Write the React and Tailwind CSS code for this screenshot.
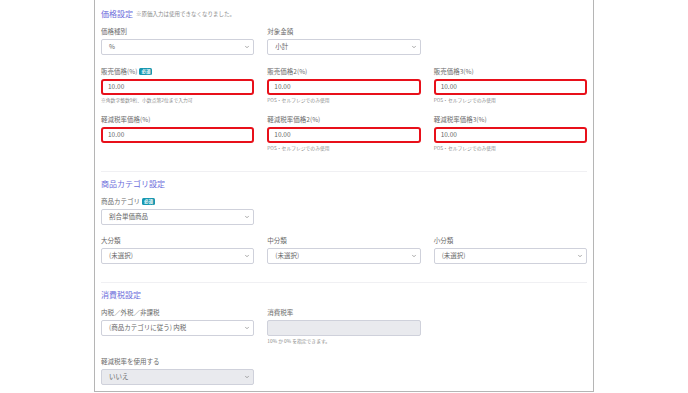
import React from 'react';
import { ChevronDown } from 'lucide-react';

const FONT = { fontFamily: '"Noto Sans CJK JP", "Noto Sans", sans-serif' };

const Badge = () => (
  <span className="ml-[2px] inline-flex h-[7px] items-center rounded-[1.5px] bg-[#1697b0] px-[2px] text-[4.5px] font-bold leading-none text-white">
    必須
  </span>
);

const Label = ({ children, required }) => (
  <div className="flex h-[8px] items-center text-[6.5px] leading-[8px] text-[#6b6b6b]">
    {children}
    {required && <Badge />}
  </div>
);

const Help = ({ children }) => (
  <div className="mt-[2px] h-[6px] text-[4.8px] leading-[6px] text-[#8a8a8a]">{children}</div>
);

const Select = ({ value, disabled }) => (
  <div
    className={`mt-[4px] flex h-[16px] items-center justify-between rounded-[2px] border border-[#cfd1db] pl-[7px] pr-[3px] text-[6.5px] text-[#666] ${
      disabled ? 'bg-[#e9eaee]' : 'bg-white'
    }`}
  >
    <span>{value}</span>
    <ChevronDown className="h-[6px] w-[6px] text-[#777]" strokeWidth={2.5} />
  </div>
);

const RedInput = ({ value }) => (
  <div className="mt-[4px] flex h-[16px] items-center rounded-[3px] border-2 border-[#e8101a] bg-white pl-[5px] text-[6.5px] text-[#666]">
    {value}
  </div>
);

const GrayInput = () => (
  <div className="mt-[4px] h-[16px] rounded-[2px] border border-[#cfd1db] bg-[#e9eaee]" />
);

const Title = ({ children, note }) => (
  <div className="flex h-[10px] items-center leading-[10px]">
    <span className="text-[8px] text-[#6d6ddb]">{children}</span>
    {note && <span className="ml-[3px] text-[5.5px] text-[#8a8a8a]">{note}</span>}
  </div>
);

const Row = ({ className, children }) => (
  <div className={`grid grid-cols-3 gap-x-[13px] ${className}`}>{children}</div>
);

const POS = 'POS・セルフレジでのみ使用';

export default function App() {
  return (
    <div className="h-[393px] w-[688px] bg-white" style={FONT}>
      <div className="ml-[94px] h-[392px] w-[500px] border-x-[1.5px] border-b-[1.5px] border-[#b5b5b5] px-[6px] pt-[9px]">
        {/* 価格設定 */}
        <Title note="※原価入力は使用できなくなりました。">価格設定</Title>
        <Row className="mt-[8px]">
          <div>
            <Label>価格種別</Label>
            <Select value="%" />
          </div>
          <div>
            <Label>対象金額</Label>
            <Select value="小計" />
          </div>
        </Row>
        <Row className="mt-[12px]">
          <div>
            <Label required>販売価格(%)</Label>
            <RedInput value="10.00" />
            <Help>※角数字整数9桁、小数点第2位まで入力可</Help>
          </div>
          <div>
            <Label>販売価格2(%)</Label>
            <RedInput value="10.00" />
            <Help>{POS}</Help>
          </div>
          <div>
            <Label>販売価格3(%)</Label>
            <RedInput value="10.00" />
            <Help>{POS}</Help>
          </div>
        </Row>
        <Row className="mt-[12px]">
          <div>
            <Label>軽減税率価格(%)</Label>
            <RedInput value="10.00" />
          </div>
          <div>
            <Label>軽減税率価格2(%)</Label>
            <RedInput value="10.00" />
            <Help>{POS}</Help>
          </div>
          <div>
            <Label>軽減税率価格3(%)</Label>
            <RedInput value="10.00" />
            <Help>{POS}</Help>
          </div>
        </Row>

        <div className="mt-[20px] h-px bg-[#f0f0f3]" />

        {/* 商品カテゴリ設定 */}
        <div className="mt-[7px]">
          <Title>商品カテゴリ設定</Title>
        </div>
        <Row className="mt-[8px]">
          <div>
            <Label required>商品カテゴリ</Label>
            <Select value="割合単価商品" />
          </div>
        </Row>
        <Row className="mt-[11px]">
          <div>
            <Label>大分類</Label>
            <Select value="(未選択)" />
          </div>
          <div>
            <Label>中分類</Label>
            <Select value="(未選択)" />
          </div>
          <div>
            <Label>小分類</Label>
            <Select value="(未選択)" />
          </div>
        </Row>

        <div className="mt-[18px] h-px bg-[#f0f0f3]" />

        {/* 消費税設定 */}
        <div className="mt-[7px]">
          <Title>消費税設定</Title>
        </div>
        <Row className="mt-[8px]">
          <div>
            <Label>内税／外税／非課税</Label>
            <Select value="(商品カテゴリに従う) 内税" />
          </div>
          <div>
            <Label>消費税率</Label>
            <GrayInput />
            <Help>10% か 0% を指定できます。</Help>
          </div>
        </Row>
        <Row className="mt-[13px]">
          <div>
            <Label>軽減税率を使用する</Label>
            <Select value="いいえ" disabled />
          </div>
        </Row>
      </div>
    </div>
  );
}
